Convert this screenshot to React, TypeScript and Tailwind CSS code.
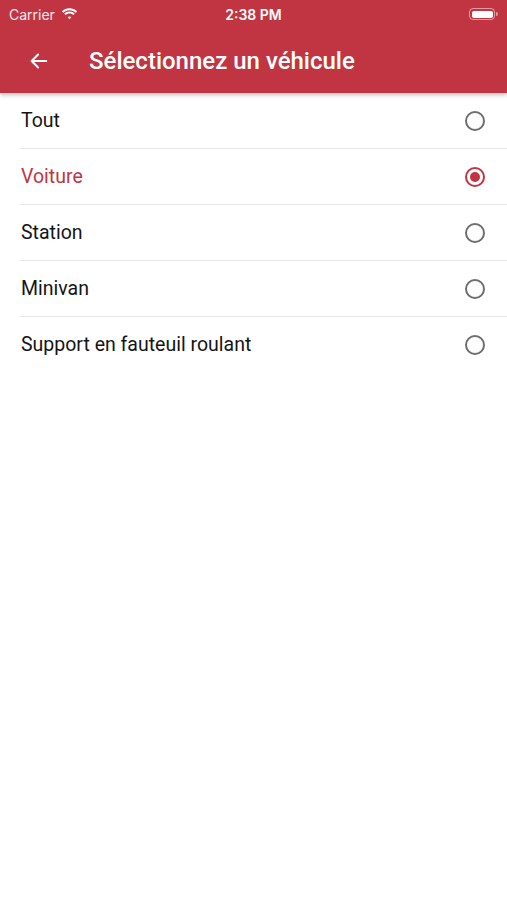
import { useState } from 'react';

const options = ['Tout', 'Voiture', 'Station', 'Minivan', 'Support en fauteuil roulant'];

export default function App() {
  const [selected, setSelected] = useState('Voiture');

  return (
    <div className="w-[507px] h-[900px] bg-white overflow-hidden" style={{ fontFamily: 'Roboto, "Noto Sans", sans-serif' }}>
      {/* Header */}
      <div className="bg-[#c13542] text-white shadow-[0_2px_4px_rgba(0,0,0,0.25)] relative z-10">
        <div className="h-[28px] flex items-center justify-between px-[9px]">
          <div className="flex items-center gap-[6px] w-[150px]">
            <span className="text-[14px] text-white/90" style={{ fontFamily: 'Inter, sans-serif' }}>Carrier</span>
            <svg width="17" height="12" viewBox="0 0 17 12" fill="white">
              <path d="M8.5 2.2c2.4 0 4.6.9 6.3 2.5l1.3-1.4C14.1 1.3 11.4.2 8.5.2S2.9 1.3.9 3.3l1.3 1.4C3.9 3.1 6.1 2.2 8.5 2.2z" />
              <path d="M8.5 5.4c1.5 0 2.9.6 4 1.6l1.3-1.4c-1.4-1.3-3.3-2.1-5.3-2.1S4.6 4.3 3.2 5.6L4.5 7c1.1-1 2.5-1.6 4-1.6z" />
              <path d="M8.5 8.5c.7 0 1.3.3 1.8.7L8.5 11.2 6.7 9.2c.5-.4 1.1-.7 1.8-.7z" />
            </svg>
          </div>
          <span className="text-[14px] font-semibold" style={{ fontFamily: 'Inter, sans-serif' }}>2:38 PM</span>
          <div className="w-[150px] flex justify-end">
            <div className="flex items-center">
              <div className="w-[26px] h-[12px] rounded-[4px] border border-white/50 p-[1.5px]">
                <div className="w-full h-full bg-white rounded-[2px]" />
              </div>
              <div className="w-[2px] h-[4px] bg-white/50 rounded-r-sm ml-[1px]" />
            </div>
          </div>
        </div>
        <div className="h-[65px] flex items-center">
          <button className="w-[78px] h-full flex items-center pl-[28px]">
            <svg width="22" height="22" viewBox="0 0 24 24" fill="none" stroke="white" strokeWidth="2.2" strokeLinecap="round" strokeLinejoin="round">
              <path d="M20 12H4.5" />
              <path d="M11 5l-7 7 7 7" />
            </svg>
          </button>
          <h1 className="ml-[11px] text-[24px] font-medium">Sélectionnez un véhicule</h1>
        </div>
      </div>

      {/* List */}
      <div className="pl-[20px]">
        {options.map((opt, i) => {
          const active = opt === selected;
          return (
            <div
              key={opt}
              onClick={() => setSelected(opt)}
              className={`h-[56px] flex items-center justify-between pr-[22px] cursor-pointer ${
                i < options.length - 1 ? 'border-b border-[#e6e6e6]' : ''
              }`}
            >
              <span className={`pl-[1px] text-[19.5px] ${active ? 'text-[#c13542]' : 'text-[#151515]'}`}>{opt}</span>
              {active ? (
                <div className="w-[20px] h-[20px] rounded-full border-[2px] border-[#c13542] flex items-center justify-center">
                  <div className="w-[10px] h-[10px] rounded-full bg-[#c13542]" />
                </div>
              ) : (
                <div className="w-[20px] h-[20px] rounded-full border-[2px] border-[#6e6e6e]" />
              )}
            </div>
          );
        })}
      </div>
    </div>
  );
}
